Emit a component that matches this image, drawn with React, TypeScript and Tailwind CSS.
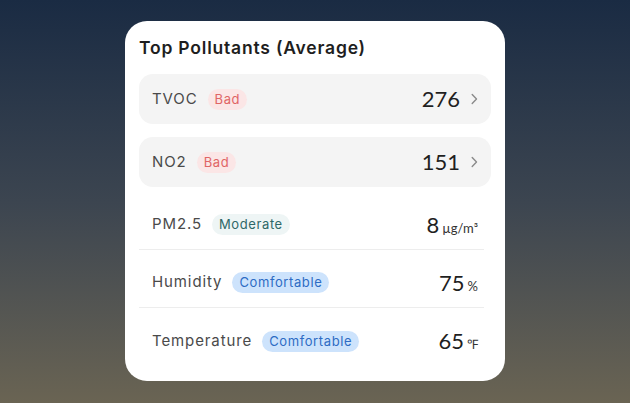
import React from 'react';

type Tone = 'bad' | 'moderate' | 'comfortable';

const badgeStyles: Record<Tone, string> = {
  bad: 'bg-[#fbe6e6] text-[#e06565]',
  moderate: 'bg-[#eef5f5] text-[#2f6868]',
  comfortable: 'bg-[#cde3fc] text-[#2d6cc4]',
};

const Badge = ({ tone, children }: { tone: Tone; children: React.ReactNode }) => (
  <span
    className={`ml-[10px] inline-flex h-[21px] items-center rounded-full px-[7px] text-[13px] leading-none tracking-[0.6px] ${badgeStyles[tone]}`}
  >
    {children}
  </span>
);

const Chevron = () => (
  <svg width="7" height="12" viewBox="0 0 7 12" fill="none" className="ml-[11px] text-[#8a8a8a]">
    <path d="M1.2 1.5 5.5 6 1.2 10.5" stroke="currentColor" strokeWidth="1.4" strokeLinecap="round" strokeLinejoin="round" />
  </svg>
);

const pollutants = [
  { name: 'TVOC', value: '276' },
  { name: 'NO2', value: '151' },
];

const metrics: { name: string; tone: Tone; label: string; value: string; unit: string; divider: boolean }[] = [
  { name: 'PM2.5', tone: 'moderate', label: 'Moderate', value: '8', unit: 'µg/m³', divider: true },
  { name: 'Humidity', tone: 'comfortable', label: 'Comfortable', value: '75', unit: '%', divider: true },
  { name: 'Temperature', tone: 'comfortable', label: 'Comfortable', value: '65', unit: '℉', divider: false },
];

export default function App() {
  return (
    <div
      className="flex h-[403px] w-full justify-center bg-gradient-to-b from-[#1a2b43] via-[#3c4550] to-[#6a6453] pt-[21px]"
      style={{ fontFamily: 'Inter, "Noto Sans", sans-serif' }}
    >
      <div className="h-[360px] w-[380px] rounded-[22px] bg-white px-[14px] pt-[15px]">
        <h2 className="mb-[14px] text-[17.5px] font-semibold leading-[24px] tracking-[0.8px] text-[#1e1e1e]">
          Top Pollutants (Average)
        </h2>

        {pollutants.map((p) => (
          <div
            key={p.name}
            className="mb-[13px] flex h-[50px] items-center rounded-[14px] bg-[#f4f4f4] pl-[13px] pr-[13px]"
          >
            <span className="text-[15px] tracking-[0.9px] text-[#4a4a4a]">{p.name}</span>
            <Badge tone="bad">Bad</Badge>
            <span
              className="ml-auto text-[22px] leading-none text-[#1f1f1f]"
              style={{ fontFamily: 'Lato, "Open Sans", sans-serif' }}
            >
              {p.value}
            </span>
            <Chevron />
          </div>
        ))}

        {metrics.map((m) => (
          <div
            key={m.name}
            className={`mr-[7px] flex h-[50px] items-center pl-[13px] pr-[6px] ${
              m.divider ? 'mb-[8px] border-b border-[#ededed]' : ''
            }`}
          >
            <span className="text-[15px] tracking-[0.9px] text-[#4a4a4a]">{m.name}</span>
            <Badge tone={m.tone}>{m.label}</Badge>
            <span
              className="ml-auto flex items-baseline text-[#1f1f1f]"
              style={{ fontFamily: 'Lato, "Open Sans", sans-serif' }}
            >
              <span className="text-[22px] leading-none">{m.value}</span>
              <span className="ml-[3px] text-[13px] leading-none text-[#333]">{m.unit}</span>
            </span>
          </div>
        ))}
      </div>
    </div>
  );
}
